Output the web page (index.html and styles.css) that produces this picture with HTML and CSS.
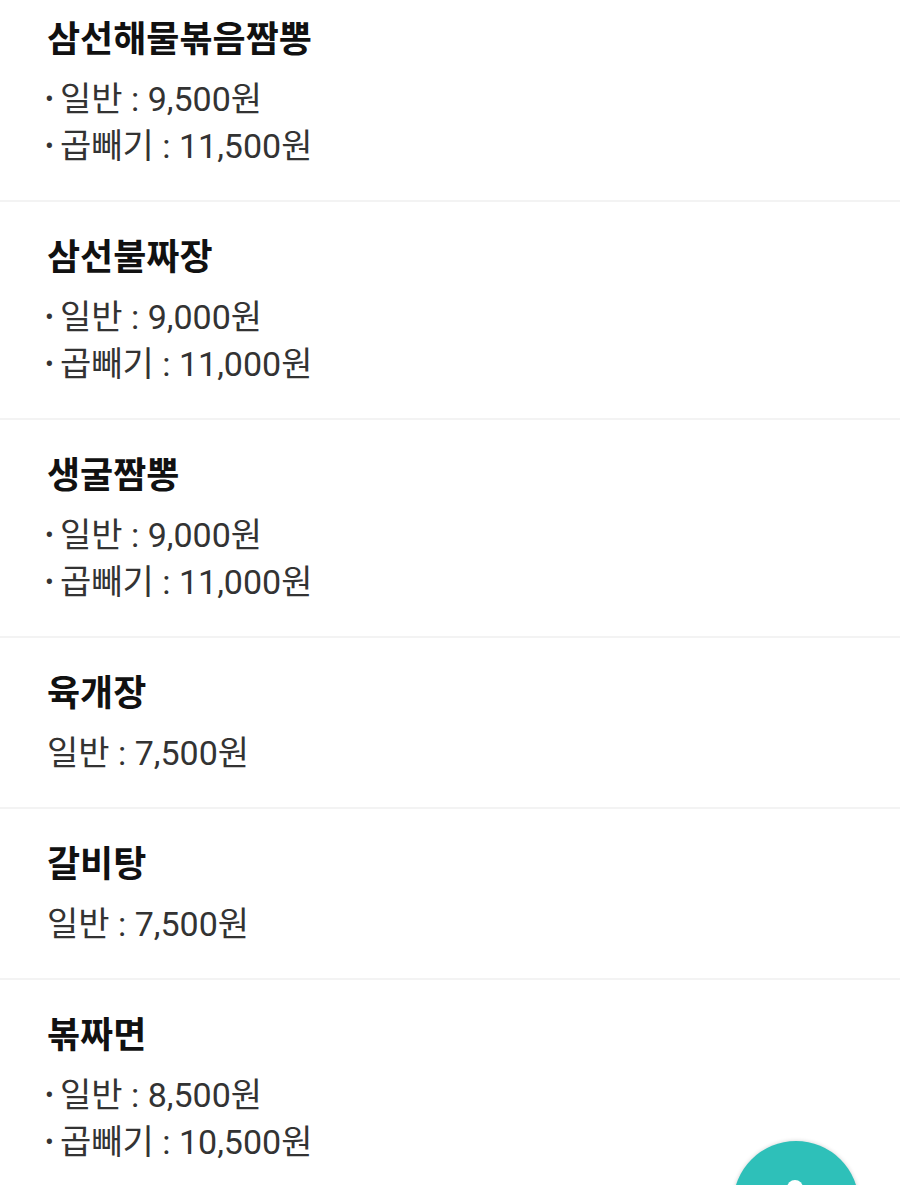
FILE: index.html
```html
<!DOCTYPE html>
<html lang="ko">
<head>
<meta charset="utf-8">
<link rel="stylesheet" href="styles.css">
</head>
<body>
<div class="list">
  <div class="item">
    <div class="title">삼선해물볶음짬뽕</div>
    <div class="line"><span class="dot">•</span>일반 : 9,500원</div>
    <div class="line"><span class="dot">•</span>곱빼기 : 11,500원</div>
  </div>
  <div class="item">
    <div class="title">삼선불짜장</div>
    <div class="line"><span class="dot">•</span>일반 : 9,000원</div>
    <div class="line"><span class="dot">•</span>곱빼기 : 11,000원</div>
  </div>
  <div class="item">
    <div class="title">생굴짬뽕</div>
    <div class="line"><span class="dot">•</span>일반 : 9,000원</div>
    <div class="line"><span class="dot">•</span>곱빼기 : 11,000원</div>
  </div>
  <div class="item">
    <div class="title">육개장</div>
    <div class="line plain">일반 : 7,500원</div>
  </div>
  <div class="item">
    <div class="title">갈비탕</div>
    <div class="line plain">일반 : 7,500원</div>
  </div>
  <div class="item">
    <div class="title">볶짜면</div>
    <div class="line"><span class="dot">•</span>일반 : 8,500원</div>
    <div class="line"><span class="dot">•</span>곱빼기 : 10,500원</div>
  </div>
</div>
<div class="fab"><span class="fab-icon"></span></div>
</body>
</html>
```
FILE: styles.css
```css
html, body {
  margin: 0;
  padding: 0;
  background: #ffffff;
  overflow: hidden;
}
body {
  width: 900px;
  height: 1185px;
  font-family: Roboto, "Noto Sans CJK KR", sans-serif;
}
.list {
  margin-top: -16px;
}
.item {
  padding: 36px 47px 30px 47px;
  border-bottom: 2px solid #f3f3f3;
}
.title {
  font-size: 36px;
  font-weight: 700;
  line-height: 40px;
  color: #111111;
  margin-bottom: 16px;
}
.line {
  font-size: 34px;
  line-height: 47px;
  color: #333333;
  margin-left: -2px;
}
.dot {
  font-size: 26px;
  display: inline-block;
  width: 15px;
  vertical-align: top;
}
.line.plain {
  margin-left: 0;
}
.fab {
  position: fixed;
  left: 733px;
  top: 1141px;
  width: 126px;
  height: 126px;
  border-radius: 50%;
  background: #2ec0b9;
  box-shadow: 0 0 4px rgba(0,0,0,0.18);
}
.fab-icon {
  position: absolute;
  left: 54px;
  top: 39px;
  width: 16px;
  height: 16px;
  border-radius: 50%;
  background: #ffffff;
}
```
